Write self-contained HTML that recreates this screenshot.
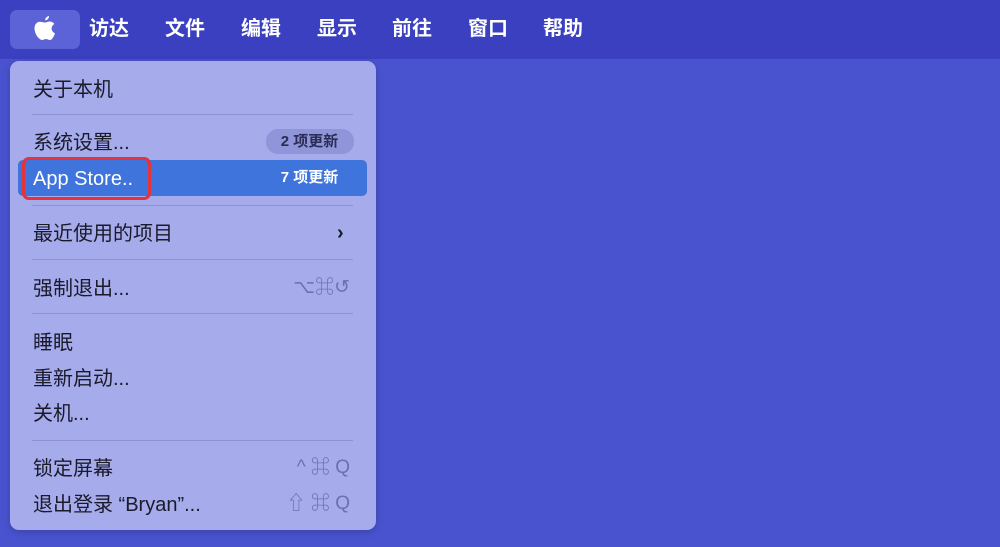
<!DOCTYPE html>
<html><head><meta charset="utf-8"><style>
*{margin:0;padding:0;box-sizing:border-box}
body{width:1000px;height:547px;background:#4953cf;position:relative;overflow:hidden;font-family:"Liberation Sans","Noto Sans CJK SC",sans-serif}
.bar{position:absolute;left:0;top:0;width:1000px;height:59px;background:#3a40bf}
.apple{position:absolute;left:10px;top:10px;width:70px;height:39px;background:#5b63d6;border-radius:7px}
.mi{position:absolute;top:16px;color:#fff;font-size:20px;font-weight:bold;line-height:26px}
.menu{position:absolute;left:10px;top:61px;width:366px;height:469px;background:#a5abeb;border-radius:9px;box-shadow:0 2px 8px rgba(0,0,0,.2)}
.it{position:absolute;left:23px;font-size:20px;color:#1a1a2a;line-height:24px}
.sep{position:absolute;left:22px;width:321px;height:1px;background:#8c92d6}
.hl{position:absolute;left:8px;top:99px;width:349px;height:36px;background:#3e74db;border-radius:5px}
.badge{position:absolute;font-size:15px;font-weight:bold;line-height:25px;border-radius:12px;padding:0 14px 0 13px;width:88px;text-align:center}
.sc{position:absolute;right:26px;color:#6a70b0;font-size:19px;line-height:24px}
.red{position:absolute;left:22px;top:157px;width:129px;height:43px;border:3px solid #e5333a;border-radius:7px}
</style></head><body>
<div class="bar"></div>
<div class="apple"></div>
<svg style="position:absolute;left:33px;top:16px" width="24" height="27" viewBox="0 0 24 27"><path fill="#fff" d="M16 0c.2 2-1.6 4.4-3.8 4.4C12 2.3 13.8.3 16 0zM12 6.5c1.3 0 2.7-1 4.5-1 1 0 3.4.3 4.8 2.5-4 2.4-3.3 7.7.7 9.2-.8 2.5-2.9 6.8-5 6.8-1.6 0-2-.9-4-.9s-2.6.9-4 .9C6.6 24 1.5 18.6 1.5 12.3c0-4.2 2.7-6.6 5.3-6.6 1.8 0 3.2 .8 5.2.8z"/></svg>
<div class="mi" style="left:89px">访达</div>
<div class="mi" style="left:165px">文件</div>
<div class="mi" style="left:241px">编辑</div>
<div class="mi" style="left:317px">显示</div>
<div class="mi" style="left:392px">前往</div>
<div class="mi" style="left:468px">窗口</div>
<div class="mi" style="left:543px">帮助</div>
<div class="menu">
<div class="it" style="top:17px">关于本机</div>
<div class="sep" style="top:53px"></div>
<div class="it" style="top:70px">系统设置...</div>
<div class="badge" style="left:256px;top:68px;background:#8f95d8;color:#2a2d55">2 项更新</div>
<div class="hl"></div>
<div class="it" style="top:106px;color:#fff">App Store..</div>
<div class="badge" style="left:256px;top:104px;color:#fff">7 项更新</div>
<div class="sep" style="top:144px"></div>
<div class="it" style="top:161px">最近使用的项目</div>
<div class="it" style="left:327px;top:160px;font-weight:bold">›</div>
<div class="sep" style="top:198px"></div>
<div class="it" style="top:216px">强制退出...</div>
<div class="sc" style="top:215px">⌥⌘↺</div>
<div class="sep" style="top:252px"></div>
<div class="it" style="top:270px">睡眠</div>
<div class="it" style="top:306px">重新启动...</div>
<div class="it" style="top:341px">关机...</div>
<div class="sep" style="top:379px"></div>
<div class="it" style="top:396px">锁定屏幕</div>
<div class="sc" style="top:395px">^ ⌘ Q</div>
<div class="it" style="top:432px">退出登录 “Bryan”...</div>
<div class="sc" style="top:431px">⇧ ⌘ Q</div>
</div>
<div class="red"></div>
</body></html>
